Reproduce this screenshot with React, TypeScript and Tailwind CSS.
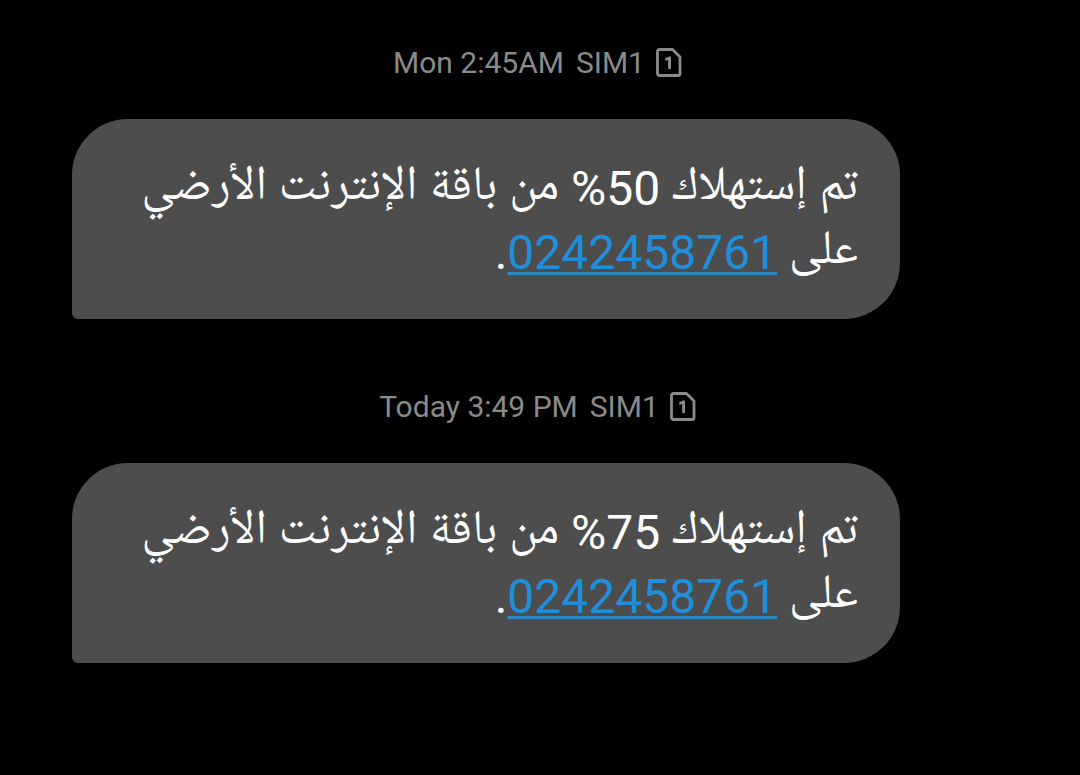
import React from 'react'

interface Message {
  id: number
  time: string
  sim: string
  percent: number
  phone: string
}

const messages: Message[] = [
  { id: 1, time: 'Mon 2:45AM', sim: 'SIM1', percent: 50, phone: '0242458761' },
  { id: 2, time: 'Today 3:49 PM', sim: 'SIM1', percent: 75, phone: '0242458761' },
]

function SimIcon() {
  return (
    <svg className="w-7 h-8" viewBox="0 0 28 32" aria-hidden="true">
      <path
        d="M4.5 2.5H17.5L25 10v16.5a2 2 0 0 1-2 2H4.5a2 2 0 0 1-2-2v-22a2 2 0 0 1 2-2z"
        fill="none"
        stroke="currentColor"
        strokeWidth="2.8"
        strokeLinejoin="round"
      />
      <path d="M14 9.5h2V22h-2.9v-9.1l-2.8 1v-2.6z" fill="currentColor" />
    </svg>
  )
}

function MessageItem({ message }: { message: Message }) {
  return (
    <li>
      <div className="flex items-center justify-center gap-3 h-8 pr-1 text-[#8a8a8a] text-[30px] leading-8">
        <time>{message.time}</time>
        <div className="flex items-center gap-2.5">
          <span>{message.sim}</span>
          <SimIcon />
        </div>
      </div>
      <div
        dir="rtl"
        lang="ar"
        className="mt-10 ml-18 mr-45 px-[42px] pt-[38px] pb-[34px] bg-[#4d4d4d] text-white text-[48px] leading-16 rounded-[56px] rounded-bl-md"
      >
        <p>
          تم إستهلاك {message.percent}% من باقة الإنترنت الأرضي على{' '}
          <a
            href={`tel:${message.phone}`}
            className="text-[#1f8fdb] underline decoration-[#2c89c4] decoration-3 underline-offset-3"
          >
            {message.phone}
          </a>
          .
        </p>
      </div>
    </li>
  )
}

export default function App() {
  return (
    <main className="min-h-screen bg-black pt-[47px] font-[Roboto,'Noto_Naskh_Arabic_UI','Noto_Naskh_Arabic',sans-serif]">
      <ul className="flex flex-col gap-18">
        {messages.map((message) => (
          <MessageItem key={message.id} message={message} />
        ))}
      </ul>
    </main>
  )
}
